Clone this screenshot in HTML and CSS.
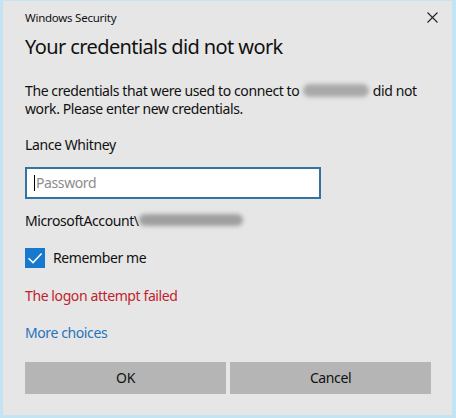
FILE: index.html
```html
<!DOCTYPE html>
<html lang="en">
<head>
<meta charset="utf-8">
<title>Windows Security</title>
<link rel="stylesheet" href="styles.css">
</head>
<body>
<div class="window">
  <div class="titlebar">
    <span class="title">Windows Security</span>
    <svg class="close" width="11" height="11" viewBox="0 0 11 11" aria-label="Close">
      <path d="M0.5 0.5 L10.5 10.5 M10.5 0.5 L0.5 10.5" stroke="#222" stroke-width="1.1" fill="none"/>
    </svg>
  </div>
  <div class="content">
    <h1 class="heading">Your credentials did not work</h1>
    <p class="message">The credentials that were used to connect to <span class="blur blur-host"></span> did not<br>work. Please enter new credentials.</p>
    <p class="user">Lance Whitney</p>
    <div class="input">
      <span class="caret"></span><span class="placeholder">Password</span>
    </div>
    <p class="account">MicrosoftAccount\<span class="blur blur-mail"></span></p>
    <div class="check-row">
      <span class="checkbox">
        <svg width="20" height="20" viewBox="0 0 20 20"><path d="M3.5 10.2 L8 14.6 L16.6 5.6" stroke="#fff" stroke-width="1.5" fill="none"/></svg>
      </span>
      <span class="check-label">Remember me</span>
    </div>
    <p class="error">The logon attempt failed</p>
    <p class="link">More choices</p>
    <div class="buttons">
      <button class="btn">OK</button>
      <button class="btn">Cancel</button>
    </div>
  </div>
</div>
</body>
</html>
```
FILE: styles.css
```css
html, body {
  margin: 0;
  padding: 0;
  background: #c3e4f3;
}
.window {
  width: 456px;
  height: 418px;
  box-sizing: border-box;
  background: #e6e6e6;
  border-style: solid;
  border-color: #c3e4f3;
  border-width: 1px 4px 3px 3px;
  font-family: "Noto Sans", "Open Sans", sans-serif;
  color: #111;
  overflow: hidden;
}
.titlebar {
  height: 33px;
  display: flex;
  align-items: center;
  justify-content: space-between;
  padding: 0 14px 0 22px;
}
.title {
  font-size: 11.5px;
  letter-spacing: -0.25px;
  line-height: 16px;
  color: #111;
}
.close {
  display: block;
  margin-top: -1px;
}
.content {
  padding: 0 21px 0 22px;
  display: flex;
  flex-direction: column;
  align-items: flex-start;
}
.heading {
  margin: 0;
  font-size: 20px;
  letter-spacing: -0.6px;
  line-height: 26px;
  font-weight: normal;
}
.message, .user, .account, .error, .link, .placeholder, .check-label, .btn {
  margin: 0;
  font-size: 14px;
  letter-spacing: -0.4px;
  line-height: 18px;
}
.message {
  margin-top: 22px;
  white-space: nowrap;
}
.user { margin-top: 18px; }
.blur {
  display: inline-block;
  vertical-align: middle;
  background: #a9a9a9;
  border-radius: 8px;
  filter: blur(2px);
}
.blur-host {
  width: 66px;
  height: 13px;
  margin: -4px 1px 0 0;
}
.blur-mail {
  width: 104px;
  height: 12px;
  margin: -4px 0 0 0;
  background: #9f9f9f;
}
.input {
  margin-top: 13px;
  width: 296px;
  height: 32px;
  box-sizing: border-box;
  background: #fff;
  border: 2px solid #3274a0;
  display: flex;
  align-items: center;
  padding-left: 7px;
}
.caret {
  width: 1px;
  height: 16px;
  background: #000;
  margin-right: 1px;
}
.placeholder {
  color: #8c8c8c;
}
.account {
  margin-top: 13px;
  white-space: nowrap;
}
.check-row {
  margin-top: 18px;
  display: flex;
  align-items: center;
  height: 20px;
}
.checkbox {
  width: 20px;
  height: 20px;
  background: #1678cf;
  display: block;
}
.checkbox svg { display: block; }
.check-label {
  margin-left: 8px;
}
.error {
  margin-top: 19px;
  color: #c01f2e;
}
.link {
  margin-top: 19px;
  color: #2673bb;
}
.buttons {
  margin-top: 20px;
  align-self: stretch;
  display: grid;
  grid-template-columns: 1fr 1fr;
  gap: 4px;
}
.btn {
  height: 32px;
  border: none;
  background: #b5b5b5;
  font-family: "Noto Sans", "Open Sans", sans-serif;
  color: #111;
  padding: 0;
}
```
